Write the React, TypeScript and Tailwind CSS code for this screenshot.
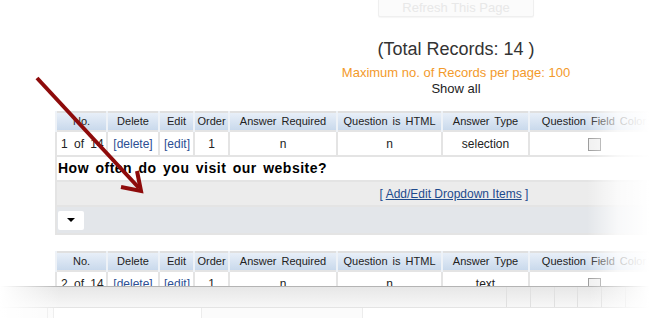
import { ReactNode } from "react";

const COLS = [51, 52, 35, 35, 108, 105, 87, 130, 193];

const HEADERS = [
  "No.",
  "Delete",
  "Edit",
  "Order",
  "Answer Required",
  "Question is HTML",
  "Answer Type",
  "Question Field Color",
  "",
];

const Header = () => (
  <tr className="h-[19px]">
    {HEADERS.map((h, i) => (
      <th
        key={i}
        className="border-x-2 border-[#eef2f7] bg-linear-to-b from-[#e8eff8] to-[#c9d9ec] px-0 text-center text-[11px] font-normal whitespace-nowrap text-[#222] [word-spacing:2px]"
      >
        {h}
      </th>
    ))}
  </tr>
);

const Cell = ({ children }: { children?: ReactNode }) => (
  <td className="border-2 border-[#e4e4e4] bg-white px-1 text-center text-[12px] whitespace-nowrap text-[#222] [word-spacing:3px]">
    {children}
  </td>
);

const DataRow = ({ n, type }: { n: number; type: string }) => (
  <tr className="h-[25px]">
    <Cell>{`${n} of 14`}</Cell>
    <Cell>
      <span className="text-[#2c4f94]">[delete]</span>
    </Cell>
    <Cell>
      <span className="text-[#2c4f94]">[edit]</span>
    </Cell>
    <Cell>1</Cell>
    <Cell>n</Cell>
    <Cell>n</Cell>
    <Cell>{type}</Cell>
    <Cell>
      <span className="inline-block h-[13px] w-[13px] border border-[#9a9a9a] bg-[#f0f0f0] align-middle" />
    </Cell>
    <Cell />
  </tr>
);

const Colgroup = () => (
  <colgroup>
    {COLS.map((w, i) => (
      <col key={i} style={{ width: w }} />
    ))}
  </colgroup>
);

export default function App() {
  return (
    <div className="relative h-[318px] w-[649px] overflow-hidden bg-white font-['Liberation_Sans',Arial,sans-serif]">
      <div className="ml-[55px] flex w-[802px] flex-col items-center">
        <div className="-mt-[2px] flex h-[19px] w-[156px] items-center justify-center rounded-[2px] border border-[#efefef] bg-[#fbfbfb] text-[13px] text-[#e8e8e8] shadow-[0_1px_1px_rgba(0,0,0,0.04)]">
          Refresh This Page
        </div>
        <div className="mt-[21px] text-[18px] leading-[22px] text-[#333]">(Total Records: 14 )</div>
        <div className="mt-[5px] text-[13px] leading-[16px] text-[#f39a2b]">
          Maximum no. of Records per page: 100
        </div>
        <div className="text-[13px] leading-[16px] text-[#222]">Show all</div>

        <table className="mt-[14px] w-[796px] table-fixed border-collapse self-start border-2 border-[#e0e0e0]">
          <Colgroup />
          <tbody>
            <Header />
            <DataRow n={1} type="selection" />
            <tr className="h-[25px]">
              <td
                colSpan={9}
                className="border-2 border-[#e4e4e4] bg-white px-[1px] text-[14px] font-bold tracking-[0.5px] text-black [word-spacing:2px]"
              >
                How often do you visit our website?
              </td>
            </tr>
            <tr className="h-[25px]">
              <td colSpan={9} className="border-2 border-[#e4e4e4] bg-[#ececec] text-center text-[12px] text-[#1d4a8c]">
                [ <span className="underline">Add/Edit Dropdown Items</span> ]
              </td>
            </tr>
            <tr className="h-[28px]">
              <td colSpan={9} className="border-2 border-[#e4e4e4] bg-[#e3e6ea] px-[1px]">
                <div className="flex h-[19px] w-[26px] items-center justify-center rounded-[2px] bg-white">
                  <span className="h-0 w-0 border-x-[4px] border-t-[4px] border-x-transparent border-t-black" />
                </div>
              </td>
            </tr>
          </tbody>
        </table>

        <table className="mt-[16px] w-[796px] table-fixed border-collapse self-start border-2 border-[#e0e0e0]">
          <Colgroup />
          <tbody>
            <Header />
            <DataRow n={2} type="text" />
          </tbody>
        </table>
      </div>

      {/* fade on the right */}
      <div className="pointer-events-none absolute top-0 right-0 h-full w-[62px] bg-linear-to-r from-white/0 via-white/75 to-white" />

      {/* torn bottom edge */}
      <div className="pointer-events-none absolute top-[286px] left-0 h-[32px] w-full bg-white">
        <div className="h-[21px] border-t border-[#b4b4b4] bg-linear-to-b from-[#e7e7e7] to-[#f7f7f7]">
          <div className="ml-[506px] flex h-full">
            {[0, 1, 2, 3, 4, 5].map((i) => (
              <div key={i} className="h-full w-[24px] border-l border-[#e0e0e0]" />
            ))}
          </div>
        </div>
        <div className="flex h-[11px] border-t border-[#e4e4e4] bg-[#fbfbfb]">
          <div className="w-[50px] border-r border-[#ececec]" />
          <div className="ml-[5px] w-[155px] border-x border-[#ececec] bg-white" />
          <div className="ml-[160px] w-[300px] border-l border-[#ececec] bg-white" />
        </div>
        <div className="absolute top-0 left-0 h-full w-[60px] bg-linear-to-r from-white to-white/0" />
        <div className="absolute top-0 right-0 h-full w-[60px] bg-linear-to-r from-white/0 to-white" />
      </div>

      {/* red arrow */}
      <svg className="pointer-events-none absolute top-0 left-0" width="649" height="318">
        <line x1="37" y1="78" x2="139" y2="188" stroke="#8e0b0b" strokeWidth="4" />
        <polyline points="121,187 141,191 137,171" fill="none" stroke="#8e0b0b" strokeWidth="4" strokeLinejoin="miter" />
      </svg>
    </div>
  );
}
